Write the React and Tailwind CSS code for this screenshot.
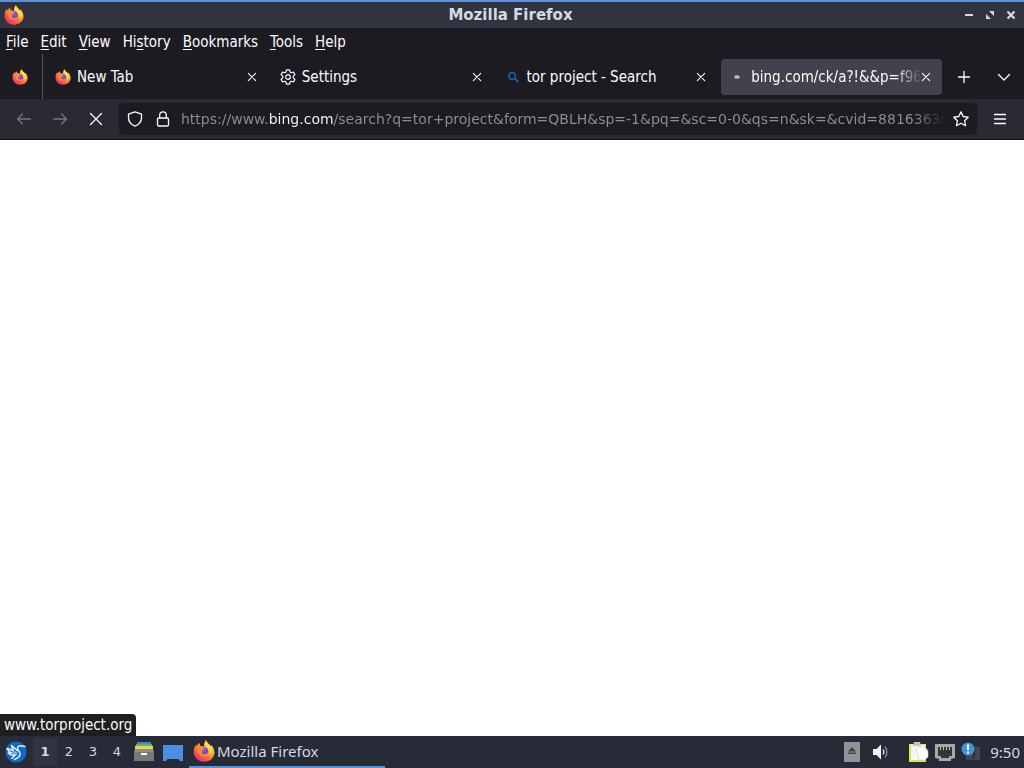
import React from "react";

const menus = ["File", "Edit", "View", "History", "Bookmarks", "Tools", "Help"];
const accessKeys = { History: 2 };

const tabs = [
  { title: "New Tab", icon: "firefox" },
  { title: "Settings", icon: "gear" },
  { title: "tor project - Search", icon: "search" },
  { title: "bing.com/ck/a?!&&p=f96", icon: "loading", active: true },
];

function FirefoxLogo({ id, className }) {
  return (
    <svg viewBox="0 0 32 32" className={className} aria-hidden="true">
      <defs>
        <linearGradient id={`${id}-body`} x1="0.85" y1="0.05" x2="0.2" y2="0.95">
          <stop offset="0" stopColor="#fff14f" />
          <stop offset="0.3" stopColor="#ffbd35" />
          <stop offset="0.58" stopColor="#ff7a35" />
          <stop offset="0.85" stopColor="#f8405c" />
          <stop offset="1" stopColor="#e93380" />
        </linearGradient>
        <radialGradient id={`${id}-globe`} cx="0.5" cy="0.4" r="0.6">
          <stop offset="0" stopColor="#9059ff" />
          <stop offset="1" stopColor="#6b3fb0" />
        </radialGradient>
      </defs>
      <path
        fill={`url(#${id}-body)`}
        d="M19 0.5c1 4 5 5.500 7 8.500c.3-.9.200-1.600 0-2.200c3.500 3.200 5.300 7.500 5.200 11.700C30.900 26 24.500 31.500 16.300 31.500C7.500 31.500 1 25 1 17c0-4.500 1.300-8 3.700-10.600l.6 2.600c1.200-2 2.700-3.600 4.600-4.500c-.4 1.500.1 3.100.9 4.200c1.900-.2 3.600.1 5.200.9c-.2-3.500.7-7 3-9.100z"
      />
      <circle cx="16" cy="16" r="6" fill={`url(#${id}-globe)`} />
      <path
        fill="#ff8a35"
        d="M6.500 12c2-2.300 4.500-3.200 7-2.500c.5.900 1.700 1.700 3.800 1.800c.1 1.400-2.200 2.200-3.600 3.300c-.8.700-.5 2-.9 2.600c-.6 1.700.6 3.200 2.600 3.600c2.400.4 4-1.100 5.900-.7c-1.900 3.400-5.500 4.500-9 3.200C8 22 5.200 17.500 6.500 12z"
      />
      <path
        fill="#ffe04a"
        fillOpacity="0.9"
        d="M19 .500c1 4.500 5.500 6 7.500 10c2 4.500.8 9.500-2.500 13c1.200-5-.2-9-3-11.500C17.800 9.500 16.500 4 19 .500z"
      />
    </svg>
  );
}

function GearIcon() {
  return (
    <svg viewBox="0 0 16 16" className="size-4" fill="none" stroke="currentColor" strokeWidth="1.2" strokeLinejoin="round" aria-hidden="true">
      <path d="M6.500.8h3l.5 2.100 1.300.8 2.100-.7 1.500 2.600-1.600 1.500v1.800l1.600 1.500-1.500 2.600-2.100-.7-1.300.8-.5 2.100h-3L6 13.100l-1.300-.8-2.100.7-1.500-2.600 1.600-1.500V7.100L1.100 5.600 2.600 3l2.100.7L6 2.900z" />
      <circle cx="8" cy="8" r="2.300" />
    </svg>
  );
}

function TabIcon({ icon }) {
  if (icon === "firefox") return <FirefoxLogo id="tab" className="size-4" />;
  if (icon === "gear") return <GearIcon />;
  if (icon === "search") {
    return (
      <svg viewBox="0 0 16 16" className="size-4" fill="none" stroke="#1b5fa8" strokeWidth="1.700" aria-hidden="true">
        <circle cx="7.200" cy="7" r="3.400" />
        <path d="M9.700 9.500l3.600 3.600" strokeWidth="2" />
      </svg>
    );
  }
  return (
    <svg viewBox="0 0 16 16" className="size-4" aria-hidden="true">
      <ellipse cx="8" cy="8" rx="2.800" ry="1.800" fill="#c3c0cf" />
    </svg>
  );
}

function Tab({ title, icon, active }) {
  return (
    <div
      role="tab"
      aria-selected={!!active}
      className={`flex h-9 min-w-0 flex-1 items-center rounded-sm pl-2 pr-1 ${active ? "bg-[#42414d]" : ""}`}
    >
      <span className="shrink-0"><TabIcon icon={icon} /></span>
      <span
        className={`ml-1.5 min-w-0 flex-1 overflow-hidden whitespace-nowrap ${
          active ? "mask-r-from-84% mask-r-to-100%" : ""
        }`}
      >
        {title}
      </span>
      <button type="button" aria-label={`Close ${title}`} className="-ml-2 flex size-6 shrink-0 items-center justify-center">
        <svg viewBox="0 0 16 16" className="size-4" fill="none" stroke="currentColor" strokeWidth="1.100" strokeLinecap="round" aria-hidden="true">
          <path d="M4.300 4.300l7.400 7.400M11.700 4.300l-7.400 7.400" />
        </svg>
      </button>
    </div>
  );
}

function TitleBar() {
  return (
    <header className="grid h-7 shrink-0 grid-cols-[1fr_auto_1fr] items-center border-t-2 border-[#5a8fdc] bg-[#2f343f] pl-1 pr-[7px] text-[#d3dae3]">
      <FirefoxLogo id="title" className="size-5" />
      <h1 className="font-['DejaVu_Sans'] text-[15px] leading-5 font-bold">Mozilla Firefox</h1>
      <div className="flex items-center justify-end gap-[9px]">
        <button type="button" aria-label="Minimize">
          <svg viewBox="0 0 12 12" className="size-3"><path d="M2 5h8v2H2z" fill="currentColor" /></svg>
        </button>
        <button type="button" aria-label="Restore">
          <svg viewBox="0 0 12 12" className="size-3">
            <path d="M5 2h5v5zM2 5v5h5z" fill="currentColor" />
          </svg>
        </button>
        <button type="button" aria-label="Close window">
          <svg viewBox="0 0 12 12" className="size-3"><path d="M2.500 2.500l7 7M9.500 2.500l-7 7" stroke="currentColor" strokeWidth="2.200" /></svg>
        </button>
      </div>
    </header>
  );
}

function MenuBar() {
  return (
    <nav className="flex h-[26px] shrink-0 items-center gap-3 px-1.5 pt-0.5">
      {menus.map((name) => {
        const at = accessKeys[name] || 0;
        return (
          <button key={name} type="button">
            {name.slice(0, at)}
            <span className="underline underline-offset-2">{name[at]}</span>
            {name.slice(at + 1)}
          </button>
        );
      })}
    </nav>
  );
}

function TabStrip() {
  return (
    <div className="flex h-[45px] shrink-0 items-center">
      <button type="button" aria-label="Firefox View" className="flex h-full w-[43px] shrink-0 items-center justify-center border-r border-[#55545e] pr-0.5">
        <FirefoxLogo id="pinned" className="size-4" />
      </button>
      <div role="tablist" className="ml-1 flex min-w-0 flex-1 gap-1">
        {tabs.map((tab) => (
          <Tab key={tab.title} {...tab} />
        ))}
      </div>
      <div className="flex w-[82px] shrink-0 items-center justify-between pl-3.5 pr-3">
        <button type="button" aria-label="New tab">
          <svg viewBox="0 0 16 16" className="size-4" fill="none" stroke="currentColor" strokeWidth="1.300" strokeLinecap="round">
            <path d="M8 2.500v11M2.500 8h11" />
          </svg>
        </button>
        <button type="button" aria-label="List all tabs">
          <svg viewBox="0 0 16 16" className="size-4" fill="none" stroke="currentColor" strokeWidth="1.300" strokeLinecap="round" strokeLinejoin="round">
            <path d="M2.500 5.500L8 11l5.500-5.500" />
          </svg>
        </button>
      </div>
    </div>
  );
}

function NavBar() {
  const stroke = { fill: "none", stroke: "currentColor", strokeWidth: 1.3, strokeLinecap: "round", strokeLinejoin: "round" };
  return (
    <div className="flex h-[41px] shrink-0 items-center border-b border-[#0f0f14] bg-[#2b2a33] pr-4">
      <div className="flex w-[119px] shrink-0 items-center gap-5 pl-4">
        <button type="button" aria-label="Back" disabled className="text-[#76757d]">
          <svg viewBox="0 0 16 16" className="size-4" {...stroke}><path d="M14.500 8H1.500M6.500 3L1.500 8l5 5" /></svg>
        </button>
        <button type="button" aria-label="Forward" disabled className="text-[#76757d]">
          <svg viewBox="0 0 16 16" className="size-4" {...stroke}><path d="M1.500 8h13M9.500 3l5 5-5 5" /></svg>
        </button>
        <button type="button" aria-label="Stop">
          <svg viewBox="0 0 16 16" className="size-4" {...stroke}><path d="M2.500 2.500l11 11M13.500 2.500l-11 11" /></svg>
        </button>
      </div>
      <div className="flex h-8 min-w-0 flex-1 items-center rounded-sm bg-[#1c1b22] px-2">
        <button type="button" aria-label="Tracking protection" className="shrink-0">
          <svg viewBox="0 0 16 16" className="size-4" {...stroke}>
            <path d="M8 .9l6.500 2.300v3.300c0 3.700-2.300 7-6.500 8.700c-4.200-1.700-6.500-5-6.500-8.700V3.200z" />
          </svg>
        </button>
        <button type="button" aria-label="Site information" className="ml-3 shrink-0">
          <svg viewBox="0 0 16 16" className="size-4" {...stroke}>
            <rect x="2.500" y="7" width="11" height="8" rx="1.300" />
            <path d="M4.700 7V4.200a3.300 3.300 0 0 1 6.600 0V7" />
          </svg>
        </button>
        {/* the host is highlighted by a gradient behind the clipped text */}
        <input
          type="text"
          aria-label="Address"
          defaultValue="https://www.bing.com/search?q=tor+project&form=QBLH&sp=-1&pq=&sc=0-0&qs=n&sk=&cvid=8816363084"
          className="ml-2.5 mr-2 min-w-0 flex-1 bg-[linear-gradient(to_right,#8f8f95_0_88px,#fbfbfe_88px_153px,#8f8f95_153px_calc(100%-32px),#8f8f9500)] bg-clip-text font-['DejaVu_Sans'] text-sm text-transparent outline-none"
        />
        <button type="button" aria-label="Bookmark this page" className="shrink-0">
          <svg viewBox="0 0 16 16" className="size-4" {...stroke}>
            <path d="M8 .9l2.200 4.600 5 .7-3.600 3.500.9 5L8 12.300l-4.500 2.400.9-5L.8 6.200l5-.7z" />
          </svg>
        </button>
      </div>
      <button type="button" aria-label="Open application menu" className="ml-[15px] shrink-0">
        <svg viewBox="0 0 16 16" className="size-4" {...stroke}><path d="M2.500 3.500h11M2.500 8h11M2.500 12.500h11" /></svg>
      </button>
    </div>
  );
}

function Taskbar() {
  return (
    <footer className="flex h-8 shrink-0 items-center bg-[#262b37] text-[#d3dae3]">
      <button type="button" aria-label="Applications" className="ml-[5px]">
        <svg viewBox="0 0 22 22" className="size-[22px]">
          <circle cx="11" cy="11" r="10.500" fill="#1268c8" />
          <g fill="none" stroke="#e4f2ff" strokeWidth="1.500" strokeLinejoin="round" strokeLinecap="round">
            <path d="M20 5.500l-3.500-.5c-2-.8-4 .5-4 2.800c0 1.700 2.600 2.600 2.600 5.200c0 2.500-2 4-5.600 5.500" />
            <path d="M12.300 9.500L6.500 4.500l1.700 5L2 7.500c1 2.200 2.500 3.500 4.500 4.300l-3.200.2c1.500 1.900 4 2.500 6.700 2l-3 3.200" />
          </g>
          <path fill="#e4f2ff" d="M8.200 9.500l4 1.500.3 3-3 1.200L7 12z" fillOpacity="0.500" />
        </svg>
      </button>
      <div className="ml-1.5 flex font-['DejaVu_Sans'] text-[13px]">
        {["1", "2", "3", "4"].map((n) => (
          <button
            key={n}
            type="button"
            className={`h-7 w-6 ${n === "1" ? "bg-[#303441] font-bold" : ""}`}
          >
            {n}
          </button>
        ))}
      </div>
      <button type="button" aria-label="File manager" className="ml-1">
        <svg viewBox="0 0 22 22" className="size-[22px]">
          <path fill="#3f86d8" d="M4 1h14v4H4z" />
          <path fill="#64b54f" d="M3 3h16v4H3z" />
          <path fill="#f0d44c" d="M2 5h18v4H2z" />
          <path fill="#8e8e8c" d="M2 8h18l1 3v9H1v-9z" />
          <path fill="#777775" d="M1 11h20v9H1z" />
          <path fill="#fff" d="M8 12h6v2H8z" />
        </svg>
      </button>
      <button type="button" aria-label="Show desktop" className="ml-2">
        <svg viewBox="0 0 20 22" className="h-[22px] w-5">
          <path fill="#4a8fe2" d="M0 4h20v16h-3l-1.500-2h-11L3 20H0z" />
        </svg>
      </button>
      <button type="button" className="ml-1.5 flex h-full w-49 items-center gap-0.5 border-b-2 border-[#5294e2] pl-1">
        <FirefoxLogo id="task" className="size-[22px]" />
        <span className="font-['Noto_Sans']">Mozilla Firefox</span>
      </button>
      <div className="ml-auto flex items-center pr-1">
        <button type="button" aria-label="Removable media">
          <svg viewBox="0 0 16 20" className="h-5 w-4">
            <path fill="#929292" d="M0 0h16v20H0z" />
            <path fill="#454545" d="M8 5l4 4.500H4zM4 10.500h8V12H4z" />
          </svg>
        </button>
        <button type="button" aria-label="Volume" className="ml-3">
          <svg viewBox="0 0 18 18" className="size-[18px]" fill="none">
            <path fill="#f2f3f5" d="M1 6h3.500L9 1.500v15L4.500 12H1z" />
            <path stroke="#c5c8ce" strokeWidth="1.500" d="M11 6.500q1.800 2.500 0 5" />
            <path stroke="#777c86" strokeWidth="1.600" d="M13 3.500q4 5.500 0 11" />
          </svg>
        </button>
        <button type="button" aria-label="Clipboard" className="ml-[18px]">
          <svg viewBox="0 0 22 22" className="size-[22px]">
            <path fill="#d9e84a" d="M1 3h17v18H1z" />
            <path fill="#f6f7f3" d="M3 4h14v15H3z" />
            <path fill="#c5c5be" d="M6 1h6l1 4H5z" />
            <path fill="#fff" stroke="#c9cbc9" strokeWidth="0.600" d="M10 6h7l3 4v6l-3 3h-7l1-5-3-3z" />
          </svg>
        </button>
        <button type="button" aria-label="Network" className="ml-1">
          <svg viewBox="0 0 22 20" className="h-5 w-[22px]">
            <path fill="#a8a8a8" d="M1 2h20v14l-4 1v2H5v-2l-4-1z" />
            <path fill="#343534" d="M4 5h14v9h-3v2H7v-2H4z" />
            <path stroke="#d0c9a4" strokeWidth="1" d="M6.500 5v3M9.500 5v3M12.500 5v3M15.500 5v3" />
          </svg>
        </button>
        <button type="button" aria-label="Notifications" className="ml-1">
          <svg viewBox="0 0 22 20" className="h-5 w-[22px]">
            <path fill="#414651" d="M9 5h11v13H6v-5z" />
            <path stroke="#2a2e38" strokeWidth="1.500" d="M14 7v10" />
            <circle cx="8" cy="7" r="6.500" fill="#3c97de" />
            <path fill="#fff" d="M7 2.500h2V8H7zM7 9.500h2v2H7z" />
          </svg>
        </button>
        <time className="ml-2 font-['Noto_Sans']">9:50</time>
      </div>
    </footer>
  );
}

export default function App() {
  return (
    <div className="flex h-screen flex-col bg-[#1c1b22] font-['DejaVu_Sans_Condensed','DejaVu_Sans',sans-serif] text-[15px] leading-5 text-[#fbfbfe]">
      <TitleBar />
      <MenuBar />
      <TabStrip />
      <NavBar />
      <main className="flex min-h-0 flex-1 items-end bg-white">
        <a href="https://www.torproject.org" className="rounded-tr-sm bg-[#1f1f1f] px-1 py-px">
          www.torproject.org
        </a>
      </main>
      <Taskbar />
    </div>
  );
}
